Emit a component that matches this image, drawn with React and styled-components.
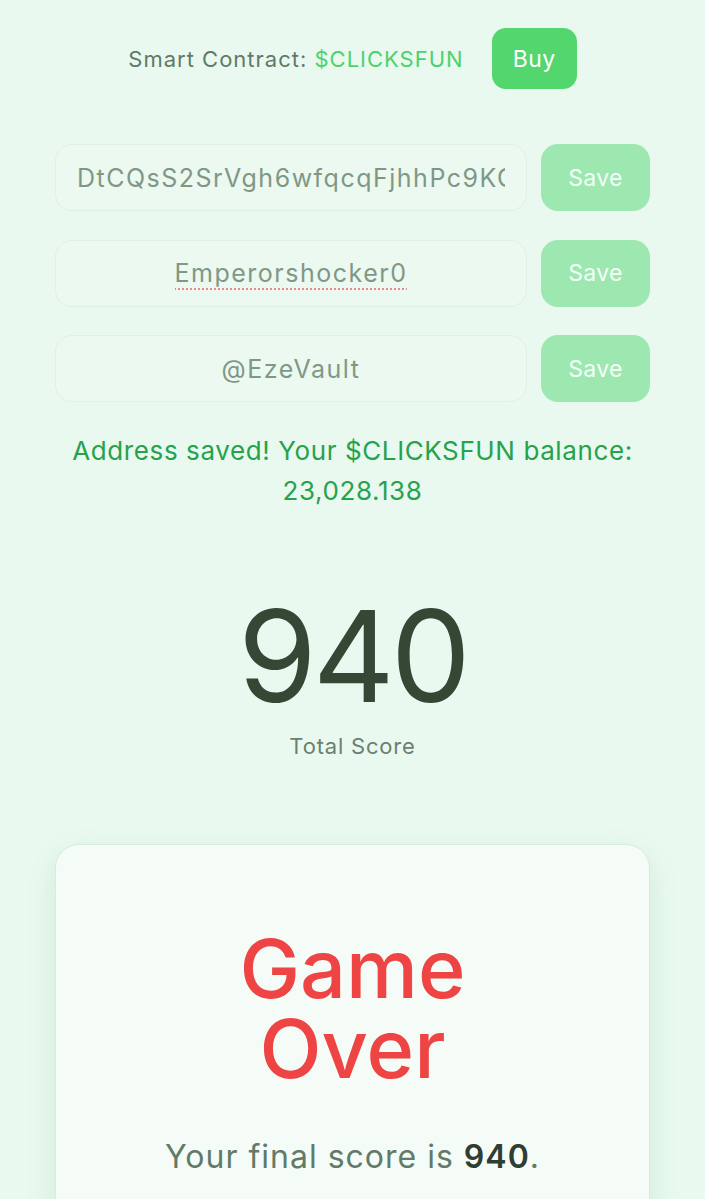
import React from "react";
import styled, { createGlobalStyle } from "styled-components";

const Global = createGlobalStyle`
  html, body { margin: 0; padding: 0; background: #e9f9ef; }
  body { font-family: Inter, "Noto Sans", sans-serif; -webkit-font-smoothing: antialiased; }
  * { box-sizing: border-box; }
`;

const Page = styled.div`
  min-height: 1199px;
  background: #e9f9ef;
  padding: 28px 55px 0;
  display: flex;
  flex-direction: column;
  align-items: stretch;
`;

const Header = styled.div`
  display: flex;
  align-items: center;
  justify-content: center;
  gap: 28px;
`;

const ContractText = styled.span`
  font-size: 22px;
  letter-spacing: 1px;
  color: #5f7a67;
`;

const Ticker = styled.span`
  color: #4cd26c;
`;

const BuyButton = styled.button`
  width: 85px;
  height: 61px;
  border: none;
  border-radius: 14px;
  background: #52d66d;
  color: #ffffff;
  font-family: inherit;
  font-size: 23px;
  letter-spacing: 0.5px;
`;

const Fields = styled.div`
  margin-top: 55px;
  display: flex;
  flex-direction: column;
  gap: 28.5px;
`;

const Row = styled.div`
  display: flex;
  gap: 14px;
  height: 67px;
`;

const Field = styled.div`
  flex: 1;
  min-width: 0;
  height: 67px;
  border: 1.5px solid #dff0e4;
  border-radius: 17px;
  background: #ecf9f0;
  padding: 0 21px;
  display: flex;
  align-items: center;
  justify-content: ${(p) => (p.$left ? "flex-start" : "center")};
  overflow: hidden;
  white-space: nowrap;
  font-size: 25px;
  letter-spacing: 1.5px;
  color: #7f9886;
`;

const FieldText = styled.span`
  display: block;
  min-width: 0;
  max-width: 100%;
  overflow: hidden;
  padding-bottom: 10px;
  margin-bottom: -10px;
  ${(p) =>
    p.$misspelled &&
    `text-decoration-line: underline; text-decoration-style: dotted; text-decoration-color: #e58a8a; text-underline-offset: 6px; text-decoration-thickness: 2px;`}
`;

const SaveButton = styled.button`
  width: 109px;
  height: 67px;
  border: none;
  border-radius: 17px;
  background: #9de8b1;
  color: #f4fff7;
  font-family: inherit;
  font-size: 23px;
  letter-spacing: 0.3px;
`;

const Message = styled.p`
  margin: 29px 0 0;
  text-align: center;
  font-size: 26px;
  letter-spacing: 0.6px;
  line-height: 40px;
  color: #26a24c;
`;

const Score = styled.div`
  margin-top: 82px;
  text-align: center;
  font-size: 127px;
  letter-spacing: -4px;
  line-height: 1;
  color: #354735;
`;

const ScoreLabel = styled.div`
  margin-top: 13px;
  text-align: center;
  font-size: 22px;
  letter-spacing: 0.8px;
  color: #6b8070;
`;

const Card = styled.div`
  margin-top: 85px;
  background: #f5fcf8;
  border: 1.5px solid #d7ecdd;
  border-radius: 24px;
  box-shadow: 0 10px 30px rgba(60, 120, 80, 0.12);
  padding: 84px 30px 60px;
  display: flex;
  flex-direction: column;
  align-items: center;
  min-height: 400px;
`;

const Title = styled.h1`
  margin: 0;
  text-align: center;
  font-size: 81px;
  line-height: 80px;
  font-weight: 500;
  color: #ef4444;
  width: 260px;
`;

const FinalScore = styled.p`
  margin: 48px 0 0;
  font-size: 32px;
  letter-spacing: 1px;
  color: #627a68;
`;

const Strong = styled.span`
  font-weight: 600;
  color: #2f3d33;
`;

const fields = [
  { value: "DtCQsS2SrVgh6wfqcqFjhhPc9KGpump", left: true },
  { value: "Emperorshocker0", misspelled: true },
  { value: "@EzeVault" },
];

export default function App() {
  return (
    <>
      <Global />
      <Page>
        <Header>
          <ContractText>
            Smart Contract: <Ticker>$CLICKSFUN</Ticker>
          </ContractText>
          <BuyButton>Buy</BuyButton>
        </Header>
        <Fields>
          {fields.map((f) => (
            <Row key={f.value}>
              <Field role="textbox" $left={f.left}>
                <FieldText $misspelled={f.misspelled}>{f.value}</FieldText>
              </Field>
              <SaveButton>Save</SaveButton>
            </Row>
          ))}
        </Fields>
        <Message>
          Address saved! Your $CLICKSFUN balance:
          <br />
          23,028.138
        </Message>
        <Score>940</Score>
        <ScoreLabel>Total Score</ScoreLabel>
        <Card>
          <Title>Game Over</Title>
          <FinalScore>
            Your final score is <Strong>940</Strong>.
          </FinalScore>
        </Card>
      </Page>
    </>
  );
}
